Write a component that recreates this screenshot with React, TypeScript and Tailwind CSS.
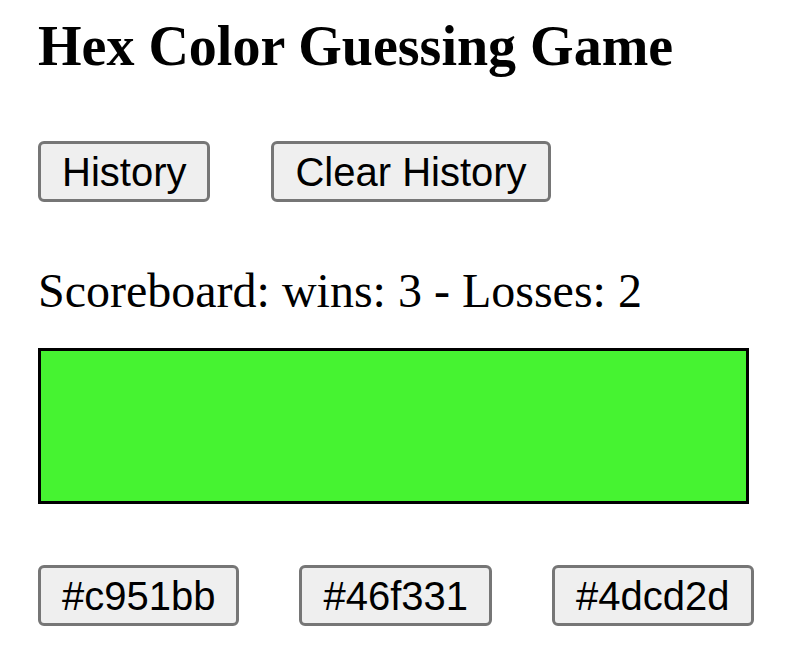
const options = ["#c951bb", "#46f331", "#4dcd2d"];

const btn =
  "h-[61px] rounded-[6px] border-[3px] border-[#767676] bg-[#efefef] px-[21px] text-[40px] leading-none text-black font-['Liberation_Sans',Arial,sans-serif]";

export default function App() {
  return (
    <div className="min-h-screen bg-white pl-[38px] pt-[15px] font-['Liberation_Serif','Times_New_Roman',serif] text-black">
      <h1 className="text-[56px] font-bold leading-[62px]">Hex Color Guessing Game</h1>

      <div className="mt-[64px] flex gap-[61px]">
        <button className={btn}>History</button>
        <button className={btn}>Clear History</button>
      </div>

      <p className="mt-[62px] text-[48px] leading-[53px]">Scoreboard: wins: 3 - Losses: 2</p>

      <div className="mt-[31px] h-[156px] w-[711px] border-[3px] border-black bg-[#46f331]" />

      <div className="mt-[61px] flex gap-[60px]">
        {options.map((c) => (
          <button key={c} className={btn}>
            {c}
          </button>
        ))}
      </div>
    </div>
  );
}
